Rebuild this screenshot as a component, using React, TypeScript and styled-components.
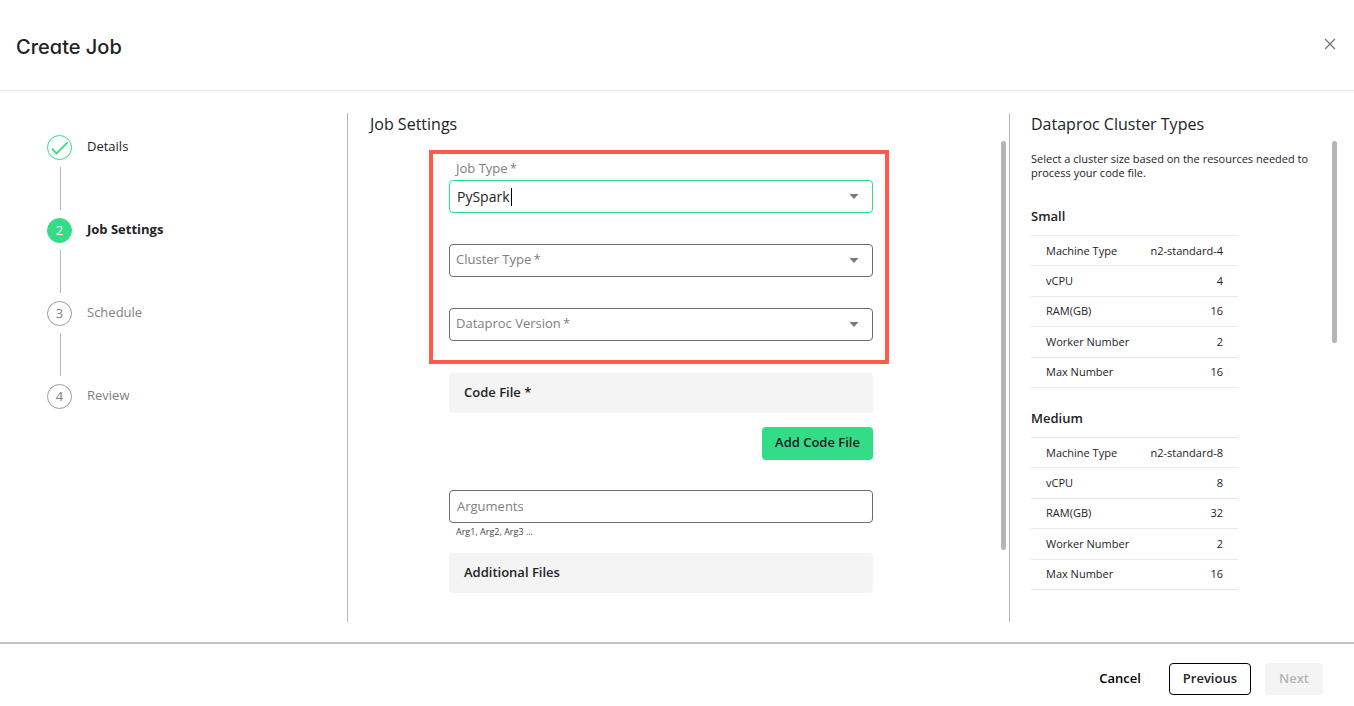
import React from "react";
import styled, { createGlobalStyle, css } from "styled-components";

const GlobalStyle = createGlobalStyle`
  *, *::before, *::after { box-sizing: border-box; }
  body {
    margin: 0;
    background: #fff;
    color: #222325;
    font-family: "Open Sans", "Noto Sans", sans-serif;
    font-size: 13px;
    line-height: 18px;
  }
  h1, h2, h3, p, ol { margin: 0; padding: 0; }
  button, input, select { font: inherit; color: inherit; }
`;

const green = "#33dc87";
const line = "#b5b5b5";
const muted = "#808080";

const Page = styled.div`
  display: flex;
  flex-direction: column;
  min-height: 100vh;
`;

const Header = styled.header`
  display: flex;
  align-items: center;
  justify-content: space-between;
  height: 91px;
  padding: 4px 17px 0 16px;
  border-bottom: 1px solid #ebebeb;
`;

const Title = styled.h1`
  font-family: Inter, sans-serif;
  font-feature-settings: "cv11";
  font-size: 20px;
  line-height: 28px;
  font-weight: 500;
`;

const CloseButton = styled.button`
  display: flex;
  padding: 0;
  margin-bottom: 6px;
  border: 0;
  background: none;
  color: #757575;
  cursor: pointer;
`;

const Body = styled.main`
  display: grid;
  grid-template-columns: 347px minmax(0, 1fr) 345px;
  flex: 1;
  padding: 22px 0 20px;
`;

const Steps = styled.ol`
  display: flex;
  flex-direction: column;
  padding: 22px 0 0 47px;
  list-style: none;
`;

type StepState = "done" | "active" | "todo";

const Step = styled.li<{ $state: StepState }>`
  display: flex;
  flex-direction: column;
  color: ${(p) => (p.$state === "todo" ? muted : "#222325")};
  font-weight: ${(p) => (p.$state === "active" ? 700 : 400)};
  &:not(:last-child)::after {
    content: "";
    width: 1px;
    height: 43px;
    margin: 7px 0 8px 13px;
    background: ${line};
  }
`;

const StepRow = styled.div`
  display: flex;
  align-items: flex-start;
  gap: 15px;
  line-height: 22px;
`;

const StepBadge = styled.span<{ $state: StepState }>`
  display: flex;
  align-items: center;
  justify-content: center;
  width: 25px;
  height: 25px;
  border: 1px solid ${(p) => (p.$state === "todo" ? "#9b9b9b" : green)};
  border-radius: 50%;
  font-weight: 400;
  ${(p) => p.$state !== "done" && "padding-bottom: 2px;"}
  ${(p) =>
    p.$state === "active" &&
    css`
      background: ${green};
      color: #fff;
    `}
`;

const Panel = styled.section<{ $side?: boolean }>`
  display: flex;
  flex-direction: column;
  gap: 6px;
  border-left: 1px solid ${line};
  padding: ${(p) => (p.$side ? "0 17px 0 21px" : "0 3px 0 22px")};
`;

const PanelTitle = styled.h2`
  font-size: 16px;
  line-height: 22px;
  font-weight: 400;
`;

const FormArea = styled.div`
  display: grid;
  grid-template-columns: 79fr 424fr 133fr;
  flex: 1;
`;

const Form = styled.form`
  grid-column: 2;
  display: flex;
  flex-direction: column;
  padding-top: 39px;
`;

const ScrollTrack = styled.div`
  width: 5px;
  justify-self: end;
`;

const ScrollThumb = styled.div<{ $share: number }>`
  height: ${(p) => p.$share}%;
  border-radius: 3px;
  background: ${line};
`;

const FieldGroup = styled.div`
  position: relative;
  display: flex;
  flex-direction: column;
  gap: 31px;
  margin-bottom: 32px;
`;

const Highlight = styled.div`
  position: absolute;
  inset: -30px -16px -23px -20px;
  border: 4px solid #ff5a4c;
  pointer-events: none;
`;

const Field = styled.div`
  position: relative;
  display: flex;
`;

const control = css`
  width: 100%;
  height: 33px;
  padding: 0 7px 2px;
  border: 1px solid #6b6b6b;
  border-radius: 4px;
  background: #fff;
  outline: none;
`;

const Select = styled.select<{ $focused?: boolean }>`
  ${control}
  padding-bottom: 0;
  appearance: none;
  font-size: 14px;
  ${(p) => p.$focused && `border-color: ${green};`}
`;

const TextInput = styled.input`
  ${control}
  &::placeholder { color: ${muted}; opacity: 1; }
`;

const FieldLabel = styled.label<{ $raised?: boolean }>`
  position: absolute;
  left: 7px;
  top: ${(p) => (p.$raised ? "-21px" : "6px")};
  color: ${muted};
  pointer-events: none;
`;

const Caret = styled.span`
  position: absolute;
  left: 62px;
  top: 8px;
  width: 1px;
  height: 18px;
  background: #000;
`;

const Arrow = styled.svg`
  position: absolute;
  right: 14px;
  top: 14px;
  pointer-events: none;
`;

const SectionBar = styled.h3`
  padding: 10px 15px 12px;
  border-radius: 4px;
  background: #f4f4f4;
  font-size: 13px;
  line-height: 18px;
  font-weight: 600;
`;

const Button = styled.button<{ $kind?: "primary" | "outline" | "text" }>`
  height: 32px;
  padding: 0 13px 2px;
  border: 1px solid transparent;
  border-radius: 4px;
  background: none;
  color: #000;
  font-weight: 600;
  cursor: pointer;
  ${(p) => p.$kind === "outline" && "border-color: #000; color: #222325;"}
  ${(p) =>
    p.$kind === "primary" &&
    `background: ${green}; color: #222325; height: 33px; padding: 0 12px 3px;`}
  &:disabled {
    background: #f4f4f4;
    color: #b5b5b5;
    cursor: default;
  }
`;

const ButtonRow = styled.div`
  display: flex;
  justify-content: flex-end;
  margin: 14px 0 30px;
`;

const Hint = styled.p`
  margin: 2px 7px 14px;
  color: #444;
  font-size: 9px;
  line-height: 14px;
`;

const SideArea = styled.div`
  display: grid;
  grid-template-columns: minmax(0, 1fr) 5px;
  flex: 1;
`;

const SideContent = styled.div`
  padding: 11px 15px 0 0;
`;

const Description = styled.p`
  margin-bottom: 27px;
  font-size: 11px;
  line-height: 14px;
`;

const Cluster = styled.section`
  margin-bottom: 21px;
`;

const ClusterName = styled.h3`
  margin-bottom: 10px;
  font-size: 13px;
  line-height: 18px;
  font-weight: 600;
`;

const Specs = styled.table`
  width: 207px;
  height: 153px;
  border-collapse: collapse;
  font-size: 11px;
  line-height: 14px;
  tr { border-bottom: 1px solid #e9e9e9; }
  tr:first-child { border-top: 1px solid #e9e9e9; }
  th, td { padding: 0 15px; }
  th { text-align: left; font-weight: 400; }
  td { text-align: right; padding-left: 0; }
`;

const Footer = styled.footer`
  display: flex;
  justify-content: flex-end;
  gap: 14px;
  padding: 19px 31px 11px;
  border-top: 2px solid #c4c4c4;
`;

const steps: { name: string; state: StepState }[] = [
  { name: "Details", state: "done" },
  { name: "Job Settings", state: "active" },
  { name: "Schedule", state: "todo" },
  { name: "Review", state: "todo" },
];

const clusters = [
  {
    name: "Small",
    specs: [
      ["Machine Type", "n2-standard-4"],
      ["vCPU", "4"],
      ["RAM(GB)", "16"],
      ["Worker Number", "2"],
      ["Max Number", "16"],
    ],
  },
  {
    name: "Medium",
    specs: [
      ["Machine Type", "n2-standard-8"],
      ["vCPU", "8"],
      ["RAM(GB)", "32"],
      ["Worker Number", "2"],
      ["Max Number", "16"],
    ],
  },
];

function SelectField({ id, label, value }: { id: string; label: string; value?: string }) {
  return (
    <Field>
      <Select id={id} $focused={Boolean(value)} defaultValue={value ?? ""}>
        {value ? <option>{value}</option> : <option value="" />}
      </Select>
      <FieldLabel htmlFor={id} $raised={Boolean(value)}>
        {label}{"\u2009"}*
      </FieldLabel>
      {value && <Caret />}
      <Arrow width="10" height="5" viewBox="0 0 10 5" aria-hidden="true">
        <path d="M0.5 0h9L5 5z" fill="#7a7a7a" />
      </Arrow>
    </Field>
  );
}

export default function App() {
  return (
    <Page>
      <GlobalStyle />
      <Header>
        <Title>Create Job</Title>
        <CloseButton aria-label="Close">
          <svg width="14" height="14" viewBox="0 0 14 14" aria-hidden="true">
            <path d="M2 2l10 10M12 2L2 12" stroke="currentColor" strokeWidth="1.3" />
          </svg>
        </CloseButton>
      </Header>

      <Body>
        <Steps>
          {steps.map((step, i) => (
            <Step key={step.name} $state={step.state}>
              <StepRow>
                <StepBadge $state={step.state}>
                  {step.state === "done" ? (
                    <svg width="23" height="23" viewBox="0 0 23 23" aria-hidden="true">
                      <path d="M4 12.6l4.6 4.9L19.6 6.4" fill="none" stroke={green} strokeWidth="1.8" />
                    </svg>
                  ) : (
                    i + 1
                  )}
                </StepBadge>
                {step.name}
              </StepRow>
            </Step>
          ))}
        </Steps>

        <Panel>
          <PanelTitle>Job Settings</PanelTitle>
          <FormArea>
            <Form>
              <FieldGroup>
                <SelectField id="job-type" label="Job Type" value="PySpark" />
                <SelectField id="cluster-type" label="Cluster Type" />
                <SelectField id="dataproc-version" label="Dataproc Version" />
                <Highlight />
              </FieldGroup>
              <SectionBar>Code File *</SectionBar>
              <ButtonRow>
                <Button type="button" $kind="primary">Add Code File</Button>
              </ButtonRow>
              <TextInput aria-label="Arguments" placeholder="Arguments" />
              <Hint>Arg1, Arg2, Arg3 ...</Hint>
              <SectionBar>Additional Files</SectionBar>
            </Form>
            <ScrollTrack>
              <ScrollThumb $share={85} />
            </ScrollTrack>
          </FormArea>
        </Panel>

        <Panel $side>
          <PanelTitle>Dataproc Cluster Types</PanelTitle>
          <SideArea>
            <SideContent>
              <Description>
                Select a cluster size based on the resources needed to process your code file.
              </Description>
              {clusters.map((cluster) => (
                <Cluster key={cluster.name}>
                  <ClusterName>{cluster.name}</ClusterName>
                  <Specs>
                    <tbody>
                      {cluster.specs.map(([name, value]) => (
                        <tr key={name}>
                          <th scope="row">{name}</th>
                          <td>{value}</td>
                        </tr>
                      ))}
                    </tbody>
                  </Specs>
                </Cluster>
              ))}
            </SideContent>
            <ScrollTrack>
              <ScrollThumb $share={42} />
            </ScrollTrack>
          </SideArea>
        </Panel>
      </Body>

      <Footer>
        <Button type="button" $kind="text">Cancel</Button>
        <Button type="button" $kind="outline">Previous</Button>
        <Button type="button" disabled>Next</Button>
      </Footer>
    </Page>
  );
}
